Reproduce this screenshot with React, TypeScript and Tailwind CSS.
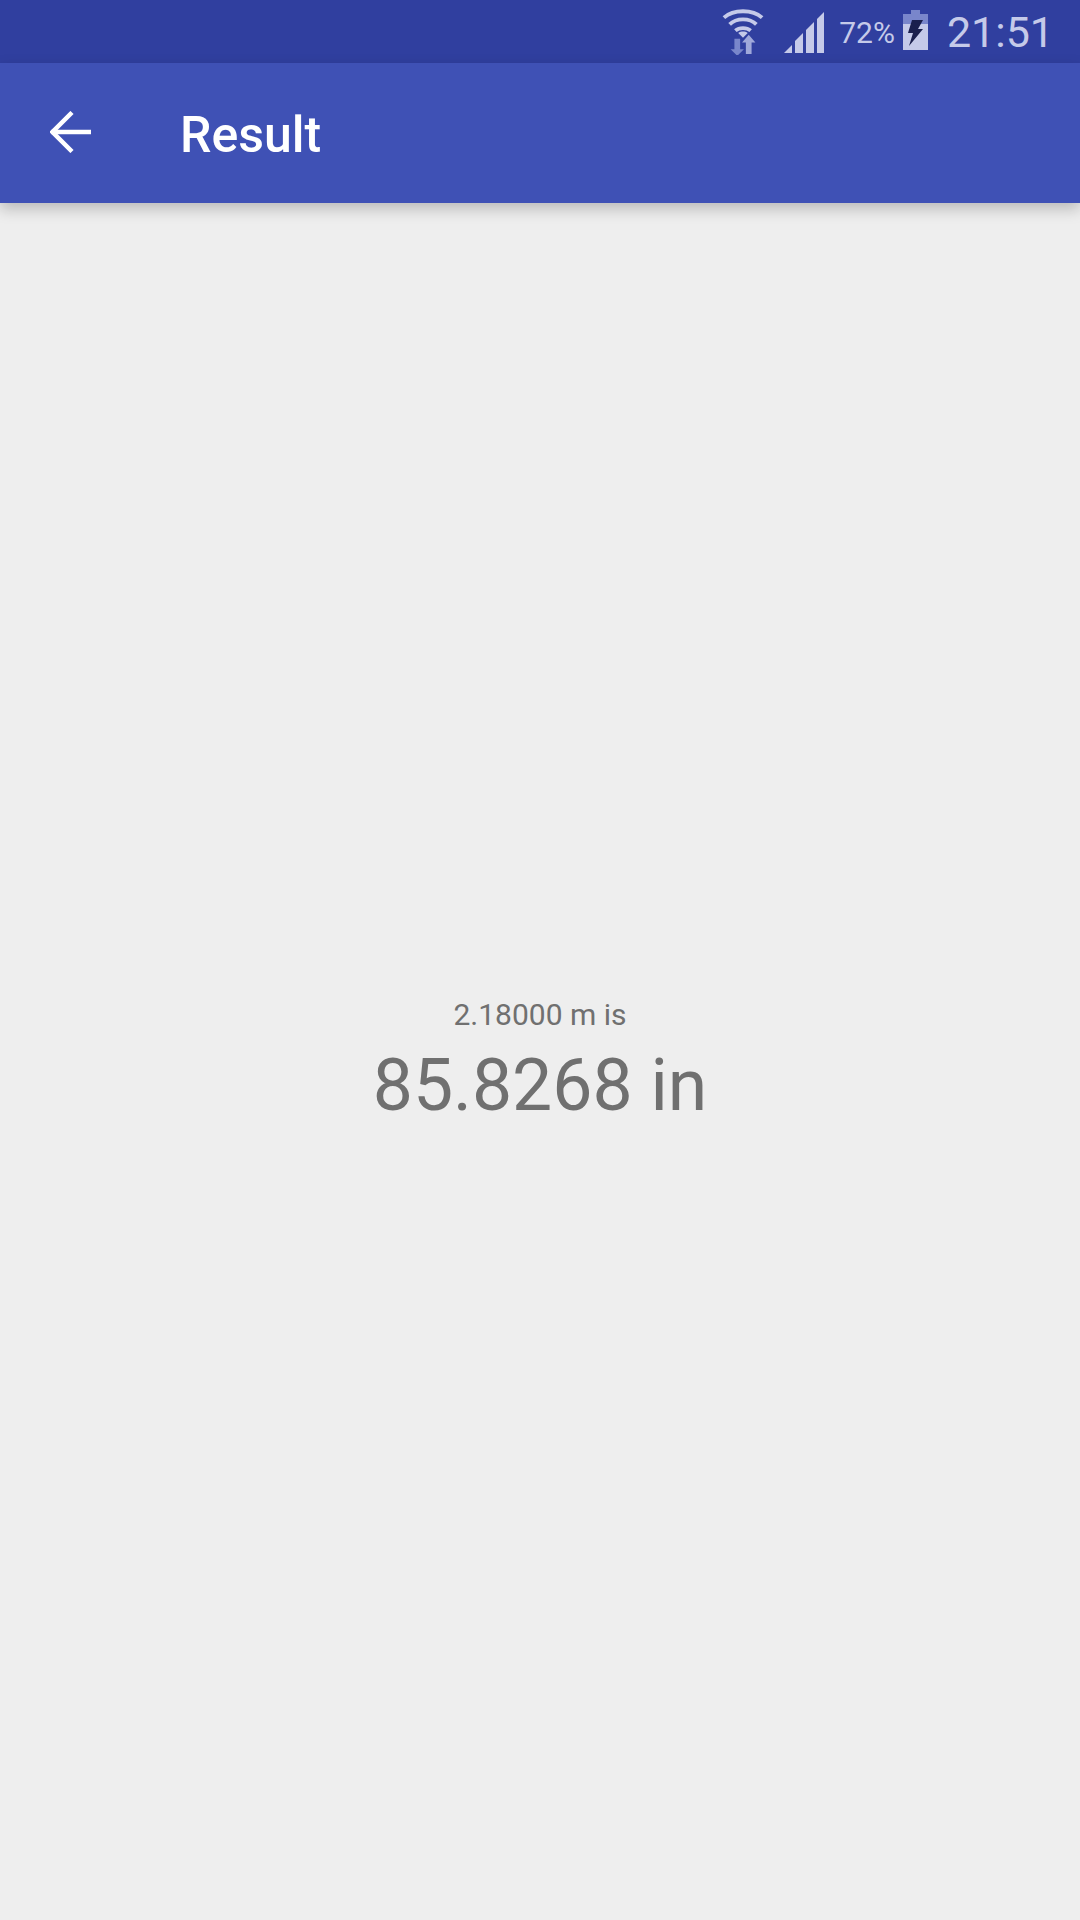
export default function App() {
  return (
    <div className="flex h-[1920px] w-[1080px] flex-col bg-[#eeeeee] font-['Roboto',sans-serif]">
      <div className="flex h-[63px] items-center justify-end bg-[#303f9f] pr-[26px] text-[#c5cae9]">
        <svg width="42" height="46" viewBox="0 0 44 48" className="mr-[20px] mt-[1px]">
          <g fill="none" stroke="#c5cae9" strokeWidth="4">
            <path d="M2 9 C12 0 32 0 42 9" />
            <path d="M8 16 C15 9 29 9 36 16" />
            <path d="M14 22.500 C18 19 26 19 30 22.500" />
          </g>
          <path d="M22 30 L17 25 C20 23 24 23 27 25 Z" fill="#c5cae9" />
          <path d="M19 31 V42 H23 L16 49 L9 42 H13 V31 Z" fill="#7986cb" />
          <path d="M25 47 V35 H21 L28 27 L35 35 H31 V47 Z" fill="#9fa8da" />
        </svg>
        <svg width="40" height="41" viewBox="0 0 40 41" className="mr-[15px] mt-[1px]" fill="#c5cae9">
          <path d="M0 41 L8 33 V41 Z" />
          <path d="M11 41 V29 L19 21 V41 Z" />
          <path d="M22 41 V18 L30 10 V41 Z" />
          <path d="M33 41 V7 L40 0 V41 Z" />
        </svg>
        <span className="mr-[8px] text-[30px] leading-none mt-[2px]">72%</span>
        <svg width="25" height="40" viewBox="0 0 25 40" className="mr-[19px] mt-[-3px]">
          <path d="M8 0 H17 V4 H25 V14 H0 V4 H8 Z" fill="#7986cb" />
          <path d="M0 14 H25 V40 H0 Z" fill="#c5cae9" />
          <path d="M9 10 H20 L15 19 H20 L6 36 L10 23 H5 Z" fill="#1a1f4d" />
        </svg>
        <span className="mt-[2px] text-[43px] leading-none">21:51</span>
      </div>
      <div className="z-10 flex h-[140px] items-center bg-[#3f51b5] shadow-[0_6px_14px_rgba(0,0,0,0.22)]">
        <svg width="42" height="42" viewBox="0 0 42 42" className="ml-[50px] mr-[88px] mt-[-2px]" fill="none" stroke="#ffffff" strokeWidth="4.500">
          <path d="M1.500 21 H41" />
          <path d="M22 1.500 L2.500 21 L22 40.500" />
        </svg>
        <span className="mt-[3px] text-[50px] leading-none font-medium text-white">Result</span>
      </div>
      <div className="flex flex-1 flex-col items-center justify-center text-[#707070]">
        <span className="text-[30px] leading-[48px]">2.18000 m is</span>
        <span className="text-[71.500px] leading-[94px]">85.8268 in</span>
      </div>
    </div>
  );
}
